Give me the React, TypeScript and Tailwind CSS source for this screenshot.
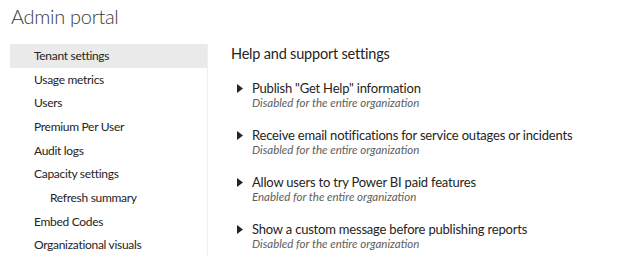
const navItems = [
  { label: "Tenant settings", active: true },
  { label: "Usage metrics" },
  { label: "Users" },
  { label: "Premium Per User" },
  { label: "Audit logs" },
  { label: "Capacity settings" },
  { label: "Refresh summary", sub: true },
  { label: "Embed Codes" },
  { label: "Organizational visuals" },
];

const settings = [
  { title: 'Publish "Get Help" information', status: "Disabled for the entire organization" },
  { title: "Receive email notifications for service outages or incidents", status: "Disabled for the entire organization" },
  { title: "Allow users to try Power BI paid features", status: "Enabled for the entire organization" },
  { title: "Show a custom message before publishing reports", status: "Disabled for the entire organization" },
];

const App = () => {
  return (
    <div className="w-[623px] h-[258px] overflow-hidden bg-white text-[#252423] font-['Lato','Liberation_Sans',sans-serif]">
      <h1 className="pl-[11px] pt-[1px] h-[44px] text-[20px] tracking-[-0.3px] font-light text-[#3b3a39] leading-[30px]">
        Admin portal
      </h1>
      <div className="flex">
        <nav className="ml-[10px] w-[198px] border-r border-[#efefef] flex flex-col">
          {navItems.map((item) => (
            <div
              key={item.label}
              className={
                "h-[23.7px] flex items-center text-[12px] tracking-[-0.3px] " +
                (item.sub ? "pl-[40px] " : "pl-[24px] ") +
                (item.active ? "bg-[#eaeaea]" : "")
              }
            >
              {item.label}
            </div>
          ))}
        </nav>
        <main className="pl-[23px] flex flex-col">
          <h2 className="text-[14.5px] tracking-[-0.2px] leading-[20px] h-[36px] text-[#252423]">
            Help and support settings
          </h2>
          <div className="flex flex-col gap-[17px] pl-[6px]">
            {settings.map((s) => (
              <div key={s.title} className="flex">
                <span className="w-[15px] pt-[4px]">
                  <svg width="6" height="9" viewBox="0 0 6 9">
                    <path d="M0 0 L6 4.5 L0 9 Z" fill="#252423" />
                  </svg>
                </span>
                <div className="flex flex-col">
                  <span className="text-[13px] tracking-[-0.2px] leading-[16px]">{s.title}</span>
                  <span className="text-[11.5px] leading-[14px] italic text-[#605e5c]">{s.status}</span>
                </div>
              </div>
            ))}
          </div>
        </main>
      </div>
    </div>
  );
};

export default App;
